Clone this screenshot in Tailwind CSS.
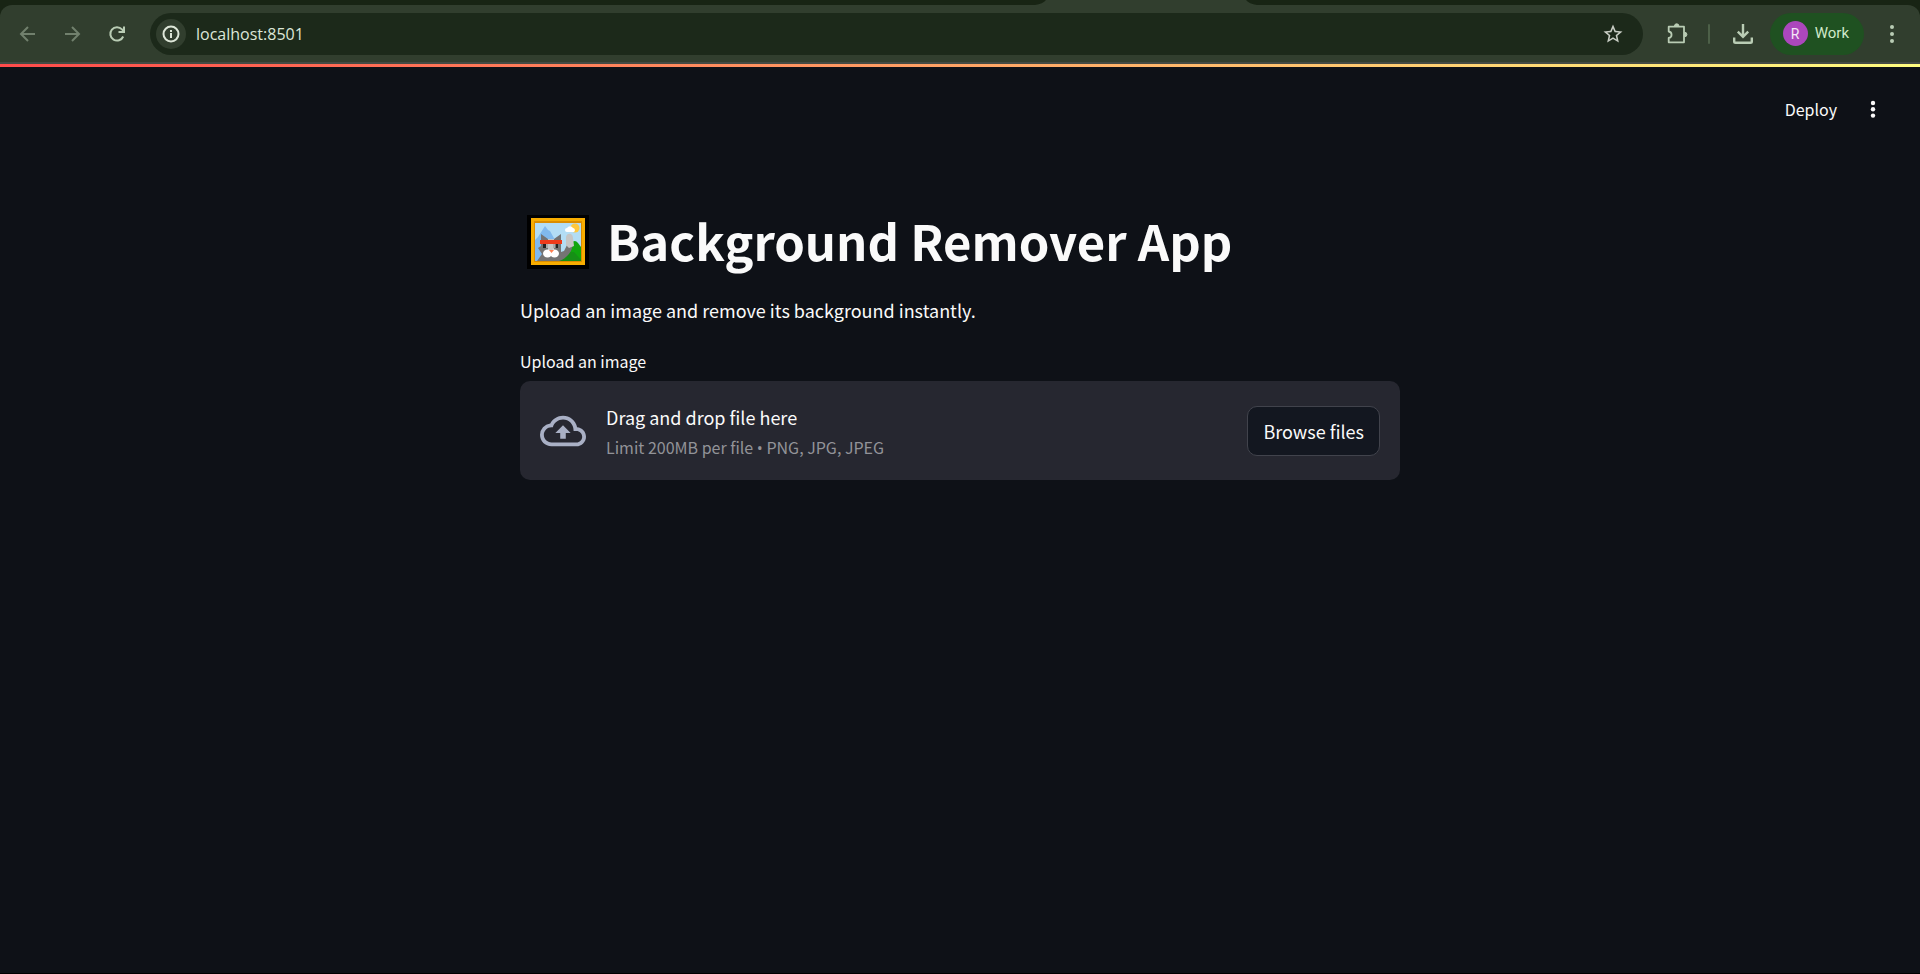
<!DOCTYPE html>
<html lang="en">
<head>
<meta charset="utf-8">
<title>Background Remover App</title>
<script src="https://cdn.jsdelivr.net/npm/@tailwindcss/browser@4"></script>
</head>
<body class="flex min-h-screen flex-col border-b border-black bg-[#0e1117] font-['Noto_Sans_CJK_SC',sans-serif] text-[#fafafa]">
<header class="bg-[#182414]">
  <div class="h-[5px]"></div>
  <nav aria-label="Browser toolbar" class="relative flex h-[59px] items-center rounded-t-xl border-b-2 border-[#444a44] bg-[#313e2e] pr-4 pl-4 text-[#b9ccb4]">
    <svg class="absolute -top-[5px] left-[53.9%] h-[5px] w-[222px]" viewBox="0 0 222 5" preserveAspectRatio="none" fill="#313e2e" aria-hidden="true"><path d="M0 5Q8 4 11 0H211Q214 4 222 5Z"/></svg>
    <button aria-label="Back" class="flex h-6 w-6 items-center justify-center text-[#71806d]">
      <svg class="size-6" viewBox="0 0 24 24" fill="none" stroke="currentColor" stroke-width="2"><path d="M19 12H5.500M12 5L5 12l7 7"/></svg>
    </button>
    <button aria-label="Forward" class="ml-5 flex h-6 w-6 items-center justify-center text-[#71806d]">
      <svg class="size-6" viewBox="0 0 24 24" fill="none" stroke="currentColor" stroke-width="2"><path d="M5 12h13.500M12 5l7 7-7 7"/></svg>
    </button>
    <button aria-label="Reload" class="ml-[21px] flex h-6 w-6 items-center justify-center">
      <svg class="size-6" viewBox="0 0 24 24" fill="none" stroke="currentColor" stroke-width="2"><path d="M18.200 14.500A6.700 6.700 0 1 1 17 7.400L18.500 9M19 4.500V10H13.500"/></svg>
    </button>
    <div class="ml-[21px] flex h-[42px] flex-1 items-center rounded-full bg-[#1c291a] pr-[18px] pl-[6px]">
      <button aria-label="View site information" class="flex size-[30px] items-center justify-center rounded-full bg-[#313e2e] text-[#dde6d8]">
        <svg class="size-[18px]" viewBox="0 0 18 18" fill="none" stroke="currentColor" stroke-width="2"><circle cx="9" cy="9" r="7.500"/><path d="M9 8v5M9 5v2"/></svg>
      </button>
      <input aria-label="Address" value="localhost:8501" class="ml-[10px] h-8 min-w-0 flex-1 bg-transparent font-['Open_Sans',sans-serif] text-base text-[#dde6d8] outline-none">
      <button aria-label="Bookmark this tab" class="text-[#c8cdc4]">
        <svg class="size-6" viewBox="0 0 24 24" fill="currentColor"><path d="M22 9.240l-7.190-.620L12 2 9.190 8.630 2 9.240l5.460 4.730L5.820 21 12 17.270 18.180 21l-1.630-7.030L22 9.240zM12 15.400l-3.760 2.270 1-4.280-3.320-2.880 4.380-.380L12 6.100l1.710 4.040 4.380.380-3.320 2.880 1 4.280L12 15.400z" transform="translate(.6 .6) scale(.95)"/></svg>
      </button>
    </div>
    <button aria-label="Extensions" class="ml-[22px]">
      <svg class="size-6" viewBox="0 0 24 24" fill="none" stroke="currentColor" stroke-width="1.800" stroke-linejoin="round"><path d="M3.700 4.700H19V20.300H3.700V16C7.500 15.500 7.500 10 3.700 9.500Z"/><path d="M9.500 4a2.200 2.200 0 0 1 4.400 0ZM19.700 10.300a2.200 2.200 0 0 1 0 4.400Z" fill="currentColor" stroke-width="1"/></svg>
    </button>
    <span class="ml-[19px] h-5 w-[2px] rounded-full bg-[#4d6048]"></span>
    <button aria-label="Downloads" class="ml-[21px]">
      <svg class="size-6" viewBox="0 0 24 24" fill="none" stroke="currentColor" stroke-width="2.400"><path d="M12 2V14.500M6.800 9.700l5.200 5.200 5.200-5.200M3.200 15.500V19.500Q3.200 20.800 4.500 20.800H19.500Q20.800 20.800 20.800 19.500V15.500"/></svg>
    </button>
    <button class="ml-[15px] flex h-[42px] items-center rounded-full bg-[#1f5121] pr-[15px] pl-[13px] font-[Roboto,sans-serif] text-[15px] text-[#cfe9c9]">
      <span class="mr-[7px] flex size-[25px] items-center justify-center rounded-full bg-[#ab47bc] text-sm text-[#f4e6f6]">R</span>Work
    </button>
    <button aria-label="Browser menu" class="ml-4">
      <svg class="size-6" viewBox="0 0 24 24" fill="currentColor"><circle cx="12" cy="5" r="2"/><circle cx="12" cy="12" r="2"/><circle cx="12" cy="19" r="2"/></svg>
    </button>
  </nav>
</header>
<div class="h-[3px] bg-linear-to-r/srgb from-[#ff4b4b] to-[#fffd80]"></div>
<div class="flex h-[83px] items-center justify-end gap-6 pr-[35px]">
  <button class="text-base leading-7">Deploy</button>
  <button aria-label="Main menu"><svg class="size-6" viewBox="0 0 24 24" fill="currentColor"><circle cx="12" cy="6" r="2.200"/><circle cx="12" cy="12.300" r="2.200"/><circle cx="12" cy="18.600" r="2.200"/></svg></button>
</div>
<main class="mx-auto w-full max-w-[880px] pt-[54px]">
  <h1 class="flex items-start text-[49px] leading-[72px] font-bold">
    <svg class="mt-[11px] mr-[18px] ml-[7px] h-[54px] w-[62px] shrink-0" viewBox="0 0 62 54" role="img" aria-label="Framed picture">
      <path fill="#000" d="M0 0H62V54H0Z"/>
      <path fill="#f8ad00" d="M4 3H58V50H4Z"/>
      <path fill="#db8d00" d="M7 6H55V47H7Z"/>
      <path fill="#b3ddf5" d="M8 8H54V46H8Z"/>
      <path fill="#80b9ed" d="M8 25l3-3 7-11 3 4 2 1 5 9 2 21H8Z"/>
      <circle cx="48" cy="13" r="4.500" fill="#ffc83d"/>
      <path fill="#fff" d="M40 17a2 2 0 0 1 0-4 3.500 3.500 0 0 1 6 0 2.200 2.200 0 0 1 1 4Z"/>
      <path fill="#10a50e" d="M31 46L44 28q4-4 7 0l3 4V46Z"/>
      <path fill="#168f16" d="M33 38l14-1 7 8v1H33Z"/>
      <path fill="#747474" d="M14 19l7 5h6l7-5v18l3-1 3-6h6l-2 6q-5 8-12 10H10l5-7-4-6 3-2Z"/>
      <path fill="#c5c5c5" d="M39 22q1-4 5-3 2 1 2 4l1 8-5 2-3-3ZM21 24h6v14h-6Z"/>
      <path fill="#222" d="M16 28h3v5h-3ZM29 28h2v5h-2Z"/>
      <path fill="#aaa" d="M19 28h2v5h-2ZM26 28h2v5h-2Z"/>
      <path fill="#ee3b1c" d="M13 25h22v4H13Z"/>
      <ellipse cx="20.500" cy="38.500" rx="4.500" ry="4" fill="#fff"/><ellipse cx="27.500" cy="38.500" rx="4.500" ry="4" fill="#fff"/>
      <path fill="#ff8052" d="M22 35h5l-2.500 3Z"/>
    </svg>
    Background Remover App
  </h1>
  <p class="mt-[18px] text-lg leading-8">Upload an image and remove its background instantly.</p>
  <label for="upload" class="mt-[21px] block text-base leading-7">Upload an image</label>
  <input id="upload" type="file" accept=".png,.jpg,.jpeg" class="hidden">
  <section aria-label="File drop area" class="mt-[6px] flex h-[99px] items-center rounded-[10px] bg-[#262730] px-5">
    <svg class="mr-5 size-[46px] text-[#a9b0c5]" viewBox="0 0 24 24" fill="currentColor" aria-hidden="true"><path d="M19.350 10.040A7.490 7.490 0 0012 4C9.110 4 6.600 5.640 5.350 8.040A5.994 5.994 0 000 14c0 3.310 2.690 6 6 6h13c2.760 0 5-2.240 5-5 0-2.640-2.050-4.780-4.650-4.960zM19 18H6c-2.210 0-4-1.790-4-4s1.790-4 4-4h.710C7.370 7.690 9.480 6 12 6c3.040 0 5.500 2.460 5.500 5.500v.500H19c1.660 0 3 1.340 3 3s-1.340 3-3 3z"/><path d="M8 13h2.550v3h2.900v-3H16l-4-4z"/></svg>
    <div class="flex-1">
      <p class="text-lg leading-8">Drag and drop file here</p>
      <p class="text-base leading-7 text-[#929398]">Limit 200MB per file <span class="font-['Open_Sans',sans-serif] leading-none">•</span> PNG, JPG, JPEG</p>
    </div>
    <button class="h-[50px] rounded-[10px] border border-[#41434c] bg-[#131720] px-[15px] text-lg leading-7">Browse files</button>
  </section>
</main>
</body>
</html>
